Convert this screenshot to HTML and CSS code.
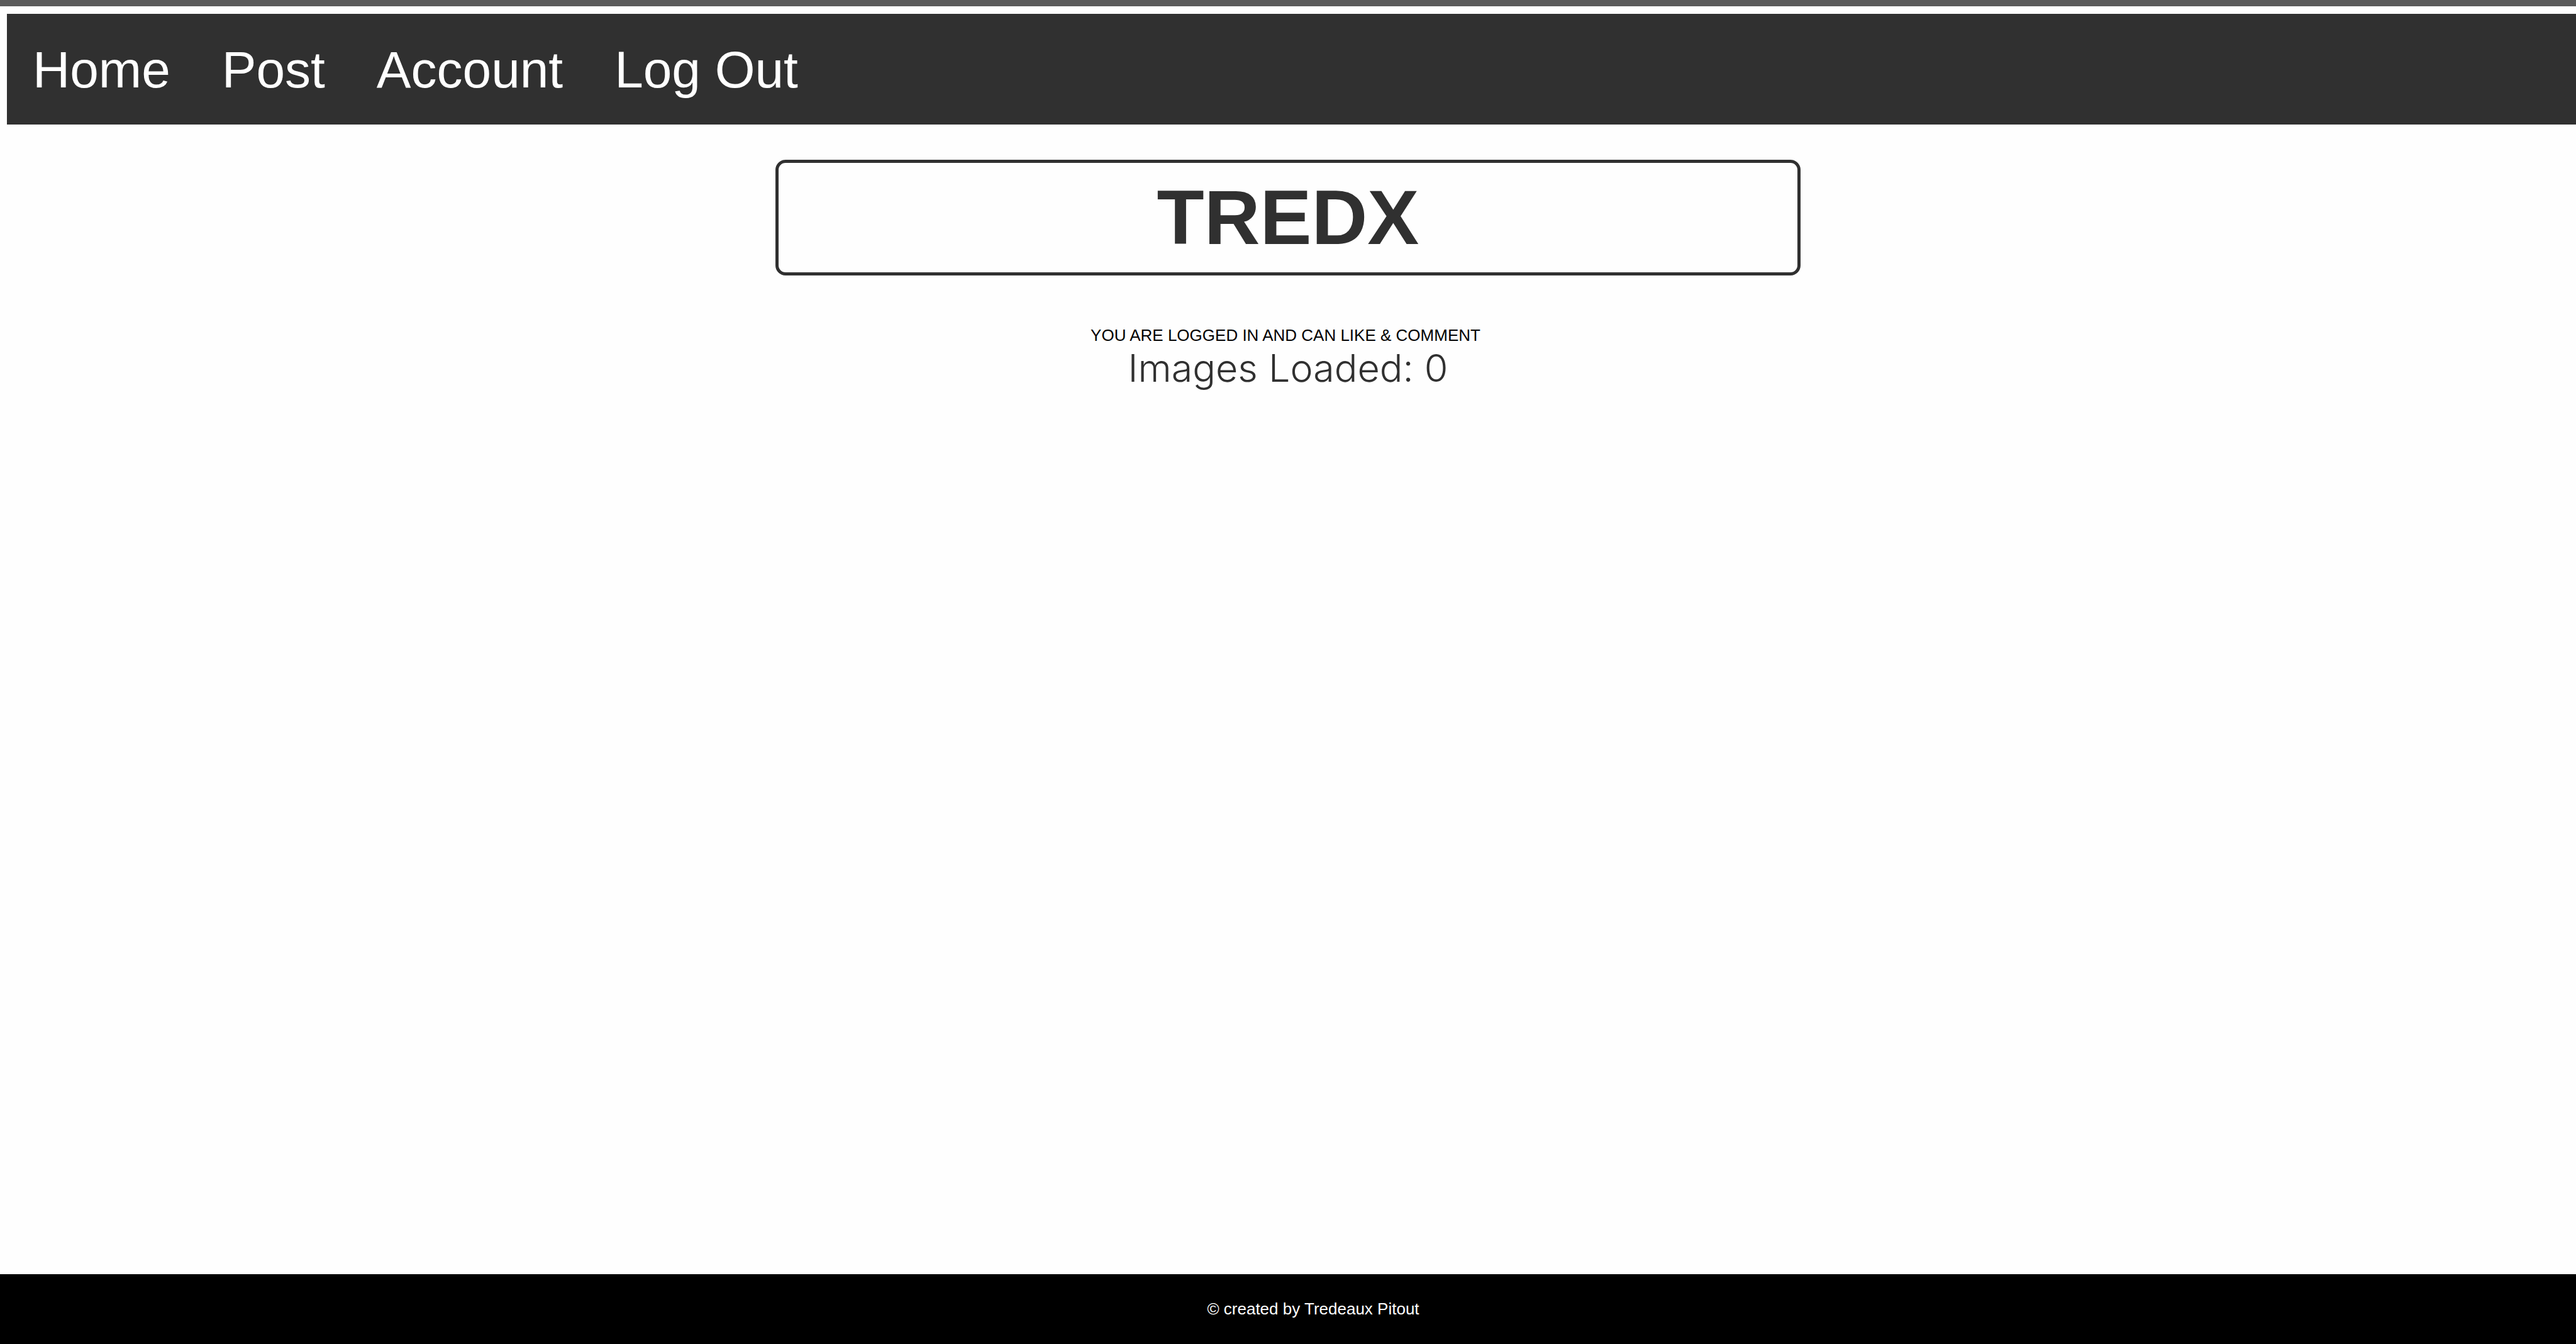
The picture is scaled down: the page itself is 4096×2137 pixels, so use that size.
FILE: index.html
```html
<!DOCTYPE html>
<html lang="en">
<head>
  <meta charset="utf-8">
  <meta name="viewport" content="width=device-width, initial-scale=1">
  <title>TREDX</title>
  <link rel="stylesheet" href="styles.css">
</head>
<body>
  <header class="site-header">
    <nav class="nav">
      <a class="nav-link" href="#home">Home</a>
      <a class="nav-link" href="#post">Post</a>
      <a class="nav-link" href="#account">Account</a>
      <a class="nav-link" href="#logout">Log Out</a>
    </nav>
  </header>
  <main class="content">
    <h1 class="title">TREDX</h1>
    <p class="status">YOU ARE LOGGED IN AND CAN LIKE &amp; COMMENT</p>
    <p class="counter">Images Loaded: 0</p>
  </main>
  <footer class="footer">
    <p class="credit">© created by Tredeaux Pitout</p>
  </footer>
</body>
</html>
```

FILE: styles.css
```css
* {
  box-sizing: border-box;
}

body {
  margin: 0;
  min-height: 100vh;
  display: flex;
  flex-direction: column;
  background: #fefefe;
  color: #000;
  font-family: "Liberation Sans", Arial, Helvetica, sans-serif;
  font-size: 26px;
  line-height: 30px;
}

h1,
p {
  margin: 0;
}

.site-header {
  padding: 12px 0 0 11px;
  border-top: 10px solid #5a5a5a;
}

.nav {
  display: flex;
  flex-wrap: wrap;
  background: #303030;
}

.nav-link {
  padding: 42px 41px 40px;
  color: #fff;
  font-size: 82px;
  line-height: 94px;
  text-decoration: none;
}

.content {
  flex: 1;
  display: flex;
  flex-direction: column;
  align-items: center;
  padding-top: 56px;
  text-align: center;
}

.title {
  width: 39.8%;
  margin-bottom: 80px;
  padding: 16px;
  border: 5px solid #303030;
  border-radius: 16px;
  color: #303030;
  font-size: 123px;
  line-height: 142px;
}

.status {
  padding-right: 8px;
}

.counter {
  color: #303030;
  font-family: Inter, "Liberation Sans", sans-serif;
  font-weight: 300;
  font-size: 61px;
  line-height: 74px;
}

.footer {
  padding: 40px 0 41px 80px;
  background: #000;
  color: #fff;
  text-align: center;
}
```
